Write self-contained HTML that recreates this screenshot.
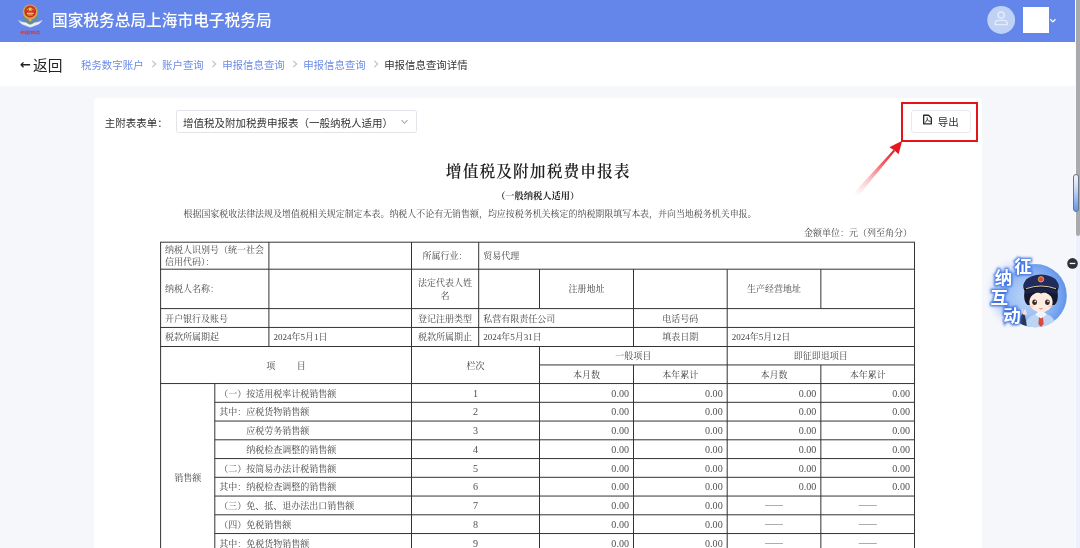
<!DOCTYPE html>
<html lang="zh-CN">
<head>
<meta charset="utf-8">
<title>申报信息查询详情</title>
<style>
*{box-sizing:border-box;margin:0;padding:0}
html,body{width:1080px;height:548px;overflow:hidden;background:#f6f7fa}
body{position:relative;will-change:transform;font-family:"Liberation Sans","Noto Sans CJK SC",sans-serif;color:#333}
.abs{position:absolute}
#hdr{left:0;top:0;width:1076px;height:41.5px;background:#6485e9}
#hdr .title{font-weight:500;left:52px;top:1.3px;height:41.5px;line-height:40.5px;font-size:15.7px;color:#fff;white-space:nowrap}
#bar{left:0;top:41.5px;width:1076px;height:44.5px;background:#fff}
#back{left:20px;top:51.2px;height:30px;line-height:30px;font-size:14.7px;color:#222;white-space:nowrap}
#back .ar{font-family:"DejaVu Sans",sans-serif;font-size:13px;display:inline-block;width:13px;position:relative;top:-2.3px;font-weight:bold}
#bc{left:81px;top:51px;height:30px;line-height:30px;font-size:10.45px;color:#6d8ce6;white-space:nowrap}
#bc b{font-weight:normal;color:#333}
#card{left:93.8px;top:97.5px;width:888.7px;height:460px;background:#fff;border-radius:3px}
#lbl{left:104.7px;top:111px;height:24px;line-height:24px;font-size:10.5px;color:#333;white-space:nowrap}
#sel{left:176px;top:109.5px;width:241px;height:23.5px;border:1px solid #e2e4e9;border-radius:2.5px;background:#fff}
#sel span{position:absolute;left:6px;top:1px;line-height:22px;font-size:10.5px;color:#333;white-space:nowrap}
#btn{left:910.5px;top:109.5px;width:60px;height:23.5px;border:1px solid #e8e9ed;border-radius:3px;background:#fff}
#btn span{position:absolute;left:26.2px;top:.9px;line-height:22px;font-size:10.5px;color:#333;white-space:nowrap}
#redbox{left:901px;top:102.2px;width:76.6px;height:39.8px;border:2.7px solid #e3141a}
.doc{font-family:"Liberation Serif","Noto Serif CJK SC",serif;color:#444}
#t1{left:161px;width:753.5px;top:159.2px;font-weight:600;color:#222;height:26px;line-height:26px;text-align:center;font-size:15.75px;letter-spacing:1.05px;padding-left:1px}
#t2{left:161px;width:753.5px;top:188.6px;height:14px;line-height:14px;text-align:center;font-size:9.25px;font-weight:bold;color:#222}
#t3{left:183.5px;top:207px;height:14px;line-height:14px;font-size:8.96px;white-space:nowrap}
#t4{left:700px;width:212px;top:226px;height:14px;line-height:14px;font-size:9px;text-align:right;white-space:nowrap}
.c{position:absolute;display:flex;align-items:center;padding:0 4.5px;font-size:9px;line-height:12.2px;color:#444;font-family:"Liberation Serif","Noto Serif CJK SC",serif}
.c.l{justify-content:flex-start;text-align:left;padding-right:2px}
.c.m{justify-content:center;text-align:center}
.c.r{justify-content:flex-end;text-align:right}
.c.n{font-size:10.1px;color:#505050;padding-right:4.5px}
.c.it{padding-left:4.5px}
.gap{display:inline-block;width:21.5px}
#grid line{stroke:#333;stroke-width:1}
</style>
</head>
<body>
<div id="hdr" class="abs">
  <svg class="abs" style="left:15px;top:2px" width="31" height="35" viewBox="15 2 31 35">
    <defs><radialGradient id="lg1" cx="50%" cy="40%" r="60%"><stop offset="0" stop-color="#d8402c"/><stop offset="1" stop-color="#c02c22"/></radialGradient></defs>
    <path d="M18.300 20.300 Q22.500 22.700 26.500 22.500 Q28.800 24.500 30.300 24.700 Q31.800 24.500 34.100 22.500 Q38.100 22.700 42.300 20.300 Q39.600 25 34.600 25.700 Q32 27.100 30.300 27.200 Q28.600 27.100 26 25.700 Q21 25 18.300 20.300Z" fill="#eef1f6" stroke="#c3cbdc" stroke-width=".4"/>
    <path d="M23.800 17.200 Q24.800 22.300 30.300 23.200 Q35.800 22.300 36.800 17.200" fill="none" stroke="#5d9870" stroke-width="1.700" stroke-linecap="round"/>
    <circle cx="30.200" cy="11.900" r="7.500" fill="#d8a94a"/>
    <circle cx="30.200" cy="11.900" r="7.500" fill="none" stroke="#c08a34" stroke-width=".9" stroke-dasharray="1.100 1"/>
    <circle cx="30.200" cy="11.500" r="5.900" fill="url(#lg1)"/>
    <path d="M30.200 6.700 l.7 1.600 1.700.15 -1.300 1.100 .4 1.700 -1.500-.9 -1.500.9 .4-1.700 -1.300-1.100 1.700-.15z" fill="#f0cc58"/>
    <circle cx="27.300" cy="9.300" r=".55" fill="#f0cc58"/><circle cx="33.100" cy="9.300" r=".55" fill="#f0cc58"/>
    <rect x="26.700" y="12.700" width="7" height="1.500" rx=".4" fill="#efc552"/>
    <rect x="27.700" y="14.600" width="5" height="1" rx=".4" fill="#e3ae40"/>
    <circle cx="30.200" cy="19.800" r="1.600" fill="#e3bb4e" stroke="#b98a30" stroke-width=".4"/>
    <text x="30.200" y="33.500" text-anchor="middle" font-family="'Liberation Sans','Noto Sans CJK SC',sans-serif" font-weight="bold" font-size="3.900" fill="#d03a34" textLength="20.300" lengthAdjust="spacingAndGlyphs">中国税务</text>
  </svg>
  <div class="abs title">国家税务总局上海市电子税务局</div>
  <svg class="abs" style="left:986px;top:5px" width="30" height="30" viewBox="0 0 30 30">
    <circle cx="15.200" cy="15" r="13.900" fill="#bfd2f6"/>
    <circle cx="15.200" cy="10.100" r="3.100" fill="none" stroke="#e3ecfb" stroke-width="1.400"/>
    <path d="M9 19.600 Q9 15.400 12.600 15.400 L17.800 15.400 Q21.400 15.400 21.400 19.600 Z" fill="none" stroke="#e3ecfb" stroke-width="1.400" stroke-linejoin="round"/>
  </svg>
  <div class="abs" style="left:1022.5px;top:7px;width:26.500px;height:25.500px;background:#fff"></div>
  <svg class="abs" style="left:1049px;top:17px" width="8" height="7" viewBox="0 0 8 7"><path d="M1.300 2.300 L3.900 4.900 L6.500 2.300" fill="none" stroke="#fff" stroke-width="1.250"/></svg>
</div>
<div id="bar" class="abs"></div>
<div id="back" class="abs"><span class="ar">←</span>返回</div>
<div id="bc" class="abs">税务数字账户<svg width="18.4" height="8" viewBox="0 0 18.4 8" style="vertical-align:0.8px"><path d="M8.3 0.9 L11.7 4 L8.3 7.1" fill="none" stroke="#bcc0c8" stroke-width="1.15"/></svg>账户查询<svg width="18.4" height="8" viewBox="0 0 18.4 8" style="vertical-align:0.8px"><path d="M8.3 0.9 L11.7 4 L8.3 7.1" fill="none" stroke="#bcc0c8" stroke-width="1.15"/></svg>申报信息查询<svg width="18.4" height="8" viewBox="0 0 18.4 8" style="vertical-align:0.8px"><path d="M8.3 0.9 L11.7 4 L8.3 7.1" fill="none" stroke="#bcc0c8" stroke-width="1.15"/></svg>申报信息查询<svg width="18.4" height="8" viewBox="0 0 18.4 8" style="vertical-align:0.8px"><path d="M8.3 0.9 L11.7 4 L8.3 7.1" fill="none" stroke="#bcc0c8" stroke-width="1.15"/></svg><b>申报信息查询详情</b></div>

<div id="card" class="abs"></div>
<div id="lbl" class="abs">主附表表单：</div>
<div id="sel" class="abs"><span>增值税及附加税费申报表（一般纳税人适用）</span>
  <svg class="abs" style="left:223px;top:8px" width="9" height="6" viewBox="0 0 9 6"><path d="M1.5 1.2 L4.5 4.3 L7.5 1.2" fill="none" stroke="#a3a6ad" stroke-width="1.1"/></svg>
</div>
<div id="btn" class="abs"><span>导出</span>
  <svg class="abs" style="left:9.7px;top:3.5px" width="12" height="13" viewBox="0 0 12 13">
    <path d="M2.650 1.250 H7.600 L10.350 4 V9.950 H2.650 Z" fill="none" stroke="#2b2b2b" stroke-width="1.300" stroke-linejoin="round"/>
    <path d="M6.200 3.700 V5.700 Q5.700 7.700 4 8.500 M6.200 5.700 Q7.200 7.200 9.200 7.400" fill="none" stroke="#2b2b2b" stroke-width=".9" stroke-linecap="round"/>
  </svg>
</div>
<div id="redbox" class="abs"></div>
<svg class="abs" style="left:840px;top:130px" width="80" height="80" viewBox="840 130 80 80">
  <defs><linearGradient id="ag" gradientUnits="userSpaceOnUse" x1="894" y1="150" x2="855" y2="195"><stop offset="0" stop-color="#ea1820" stop-opacity="1"/><stop offset=".3" stop-color="#ee2a34" stop-opacity=".75"/><stop offset=".65" stop-color="#f2424c" stop-opacity=".3"/><stop offset="1" stop-color="#f4505a" stop-opacity="0"/></linearGradient></defs>
  <path d="M893.600 149.700 L895.100 151 L857.800 196.600 L853.600 193 Z" fill="url(#ag)"/>
  <path d="M902.200 140.800 L898.600 154.300 L894.600 150.600 L889.400 147.300 Z" fill="#e8161e"/>
</svg>

<div id="t1" class="abs doc">增值税及附加税费申报表</div>
<div id="t2" class="abs doc">（一般纳税人适用）</div>
<div id="t3" class="abs doc">根据国家税收法律法规及增值税相关规定制定本表。纳税人不论有无销售额，均应按税务机关核定的纳税期限填写本表，并向当地税务机关申报。</div>
<div id="t4" class="abs doc">金额单位：元（列至角分）</div>

<svg id="grid" class="abs" style="left:0;top:0" width="1080" height="548" viewBox="0 0 1080 548"><line x1="160.1" y1="242.2" x2="915" y2="242.2"/><line x1="160.1" y1="269.2" x2="915" y2="269.2"/><line x1="160.1" y1="308.6" x2="915" y2="308.6"/><line x1="160.1" y1="327.45" x2="915" y2="327.45"/><line x1="160.1" y1="346.5" x2="915" y2="346.5"/><line x1="160.1" y1="383.55" x2="915" y2="383.55"/><line x1="539.5" y1="364.95" x2="914.5" y2="364.95"/><line x1="214.8" y1="402.3" x2="914.5" y2="402.3"/><line x1="214.8" y1="421.05" x2="914.5" y2="421.05"/><line x1="214.8" y1="439.8" x2="914.5" y2="439.8"/><line x1="214.8" y1="458.55" x2="914.5" y2="458.55"/><line x1="214.8" y1="477.3" x2="914.5" y2="477.3"/><line x1="214.8" y1="496.05" x2="914.5" y2="496.05"/><line x1="214.8" y1="514.8" x2="914.5" y2="514.8"/><line x1="214.8" y1="533.55" x2="914.5" y2="533.55"/><line x1="160.6" y1="242.2" x2="160.6" y2="550"/><line x1="914.5" y1="242.2" x2="914.5" y2="550"/><line x1="268.9" y1="242.2" x2="268.9" y2="346.5"/><line x1="411.5" y1="242.2" x2="411.5" y2="550"/><line x1="478.7" y1="242.2" x2="478.7" y2="346.5"/><line x1="539.5" y1="269.2" x2="539.5" y2="308.6"/><line x1="539.5" y1="346.5" x2="539.5" y2="550"/><line x1="633.5" y1="269.2" x2="633.5" y2="346.5"/><line x1="633.5" y1="364.95" x2="633.5" y2="550"/><line x1="727.2" y1="269.2" x2="727.2" y2="550"/><line x1="820.85" y1="269.2" x2="820.85" y2="308.6"/><line x1="820.85" y1="364.95" x2="820.85" y2="550"/><line x1="214.8" y1="383.55" x2="214.8" y2="550"/></svg>
<div class="c l " style="left:160.6px;top:242.9px;width:108.3px;height:27px">纳税人识别号（统一社会信用代码）：</div>
<div class="c m " style="left:411.5px;top:242.9px;width:67.2px;height:27px">所属行业：</div>
<div class="c l " style="left:478.7px;top:242.9px;width:435.8px;height:27px">贸易代理</div>
<div class="c l " style="left:160.6px;top:269.9px;width:108.3px;height:39.4px">纳税人名称：</div>
<div class="c m " style="left:411.5px;top:269.9px;width:67.2px;height:39.4px">法定代表人姓名</div>
<div class="c m " style="left:539.5px;top:269.9px;width:94px;height:39.4px">注册地址</div>
<div class="c m " style="left:727.2px;top:269.9px;width:93.65px;height:39.4px">生产经营地址</div>
<div class="c l " style="left:160.6px;top:309.3px;width:108.3px;height:18.85px">开户银行及账号</div>
<div class="c m " style="left:411.5px;top:309.3px;width:67.2px;height:18.85px">登记注册类型</div>
<div class="c l " style="left:478.7px;top:309.3px;width:154.8px;height:18.85px">私营有限责任公司</div>
<div class="c m " style="left:633.5px;top:309.3px;width:93.7px;height:18.85px">电话号码</div>
<div class="c l " style="left:160.6px;top:327.15px;width:108.3px;height:19.05px">税款所属期起</div>
<div class="c l " style="left:268.9px;top:327.15px;width:142.6px;height:19.05px">2024年5月1日</div>
<div class="c m " style="left:411.5px;top:327.15px;width:67.2px;height:19.05px">税款所属期止</div>
<div class="c l " style="left:478.7px;top:327.15px;width:154.8px;height:19.05px">2024年5月31日</div>
<div class="c m " style="left:633.5px;top:327.15px;width:93.7px;height:19.05px">填表日期</div>
<div class="c l " style="left:727.2px;top:327.15px;width:187.3px;height:19.05px">2024年5月12日</div>
<div class="c m " style="left:160.6px;top:347.2px;width:250.9px;height:37.05px">项<span class="gap"></span>目</div>
<div class="c m " style="left:411.5px;top:347.2px;width:128px;height:37.05px">栏次</div>
<div class="c m " style="left:539.5px;top:347.2px;width:187.7px;height:18.45px">一般项目</div>
<div class="c m " style="left:727.2px;top:347.2px;width:187.3px;height:18.45px">即征即退项目</div>
<div class="c m " style="left:539.5px;top:365.65px;width:94px;height:18.6px">本月数</div>
<div class="c m " style="left:633.5px;top:365.65px;width:93.7px;height:18.6px">本年累计</div>
<div class="c m " style="left:727.2px;top:365.65px;width:93.65px;height:18.6px">本月数</div>
<div class="c m " style="left:820.85px;top:365.65px;width:93.65px;height:18.6px">本年累计</div>
<div class="c m " style="left:160.6px;top:384.25px;width:54.2px;height:187.5px">销售额</div>
<div class="c l it" style="left:214.8px;top:384.25px;width:196.7px;height:18.75px">（一）按适用税率计税销售额</div>
<div class="c m n" style="left:411.5px;top:384.25px;width:128px;height:18.75px">1</div>
<div class="c r n" style="left:539.5px;top:384.25px;width:94px;height:18.75px">0.00</div>
<div class="c r n" style="left:633.5px;top:384.25px;width:93.7px;height:18.75px">0.00</div>
<div class="c r n" style="left:727.2px;top:384.25px;width:93.65px;height:18.75px">0.00</div>
<div class="c r n" style="left:820.85px;top:384.25px;width:93.65px;height:18.75px">0.00</div>
<div class="c l it" style="left:214.8px;top:403px;width:196.7px;height:18.75px">其中：应税货物销售额</div>
<div class="c m n" style="left:411.5px;top:403px;width:128px;height:18.75px">2</div>
<div class="c r n" style="left:539.5px;top:403px;width:94px;height:18.75px">0.00</div>
<div class="c r n" style="left:633.5px;top:403px;width:93.7px;height:18.75px">0.00</div>
<div class="c r n" style="left:727.2px;top:403px;width:93.65px;height:18.75px">0.00</div>
<div class="c r n" style="left:820.85px;top:403px;width:93.65px;height:18.75px">0.00</div>
<div class="c l it" style="left:214.8px;top:421.75px;width:196.7px;height:18.75px"><span style="padding-left:27px">应税劳务销售额</span></div>
<div class="c m n" style="left:411.5px;top:421.75px;width:128px;height:18.75px">3</div>
<div class="c r n" style="left:539.5px;top:421.75px;width:94px;height:18.75px">0.00</div>
<div class="c r n" style="left:633.5px;top:421.75px;width:93.7px;height:18.75px">0.00</div>
<div class="c r n" style="left:727.2px;top:421.75px;width:93.65px;height:18.75px">0.00</div>
<div class="c r n" style="left:820.85px;top:421.75px;width:93.65px;height:18.75px">0.00</div>
<div class="c l it" style="left:214.8px;top:440.5px;width:196.7px;height:18.75px"><span style="padding-left:27px">纳税检查调整的销售额</span></div>
<div class="c m n" style="left:411.5px;top:440.5px;width:128px;height:18.75px">4</div>
<div class="c r n" style="left:539.5px;top:440.5px;width:94px;height:18.75px">0.00</div>
<div class="c r n" style="left:633.5px;top:440.5px;width:93.7px;height:18.75px">0.00</div>
<div class="c r n" style="left:727.2px;top:440.5px;width:93.65px;height:18.75px">0.00</div>
<div class="c r n" style="left:820.85px;top:440.5px;width:93.65px;height:18.75px">0.00</div>
<div class="c l it" style="left:214.8px;top:459.25px;width:196.7px;height:18.75px">（二）按简易办法计税销售额</div>
<div class="c m n" style="left:411.5px;top:459.25px;width:128px;height:18.75px">5</div>
<div class="c r n" style="left:539.5px;top:459.25px;width:94px;height:18.75px">0.00</div>
<div class="c r n" style="left:633.5px;top:459.25px;width:93.7px;height:18.75px">0.00</div>
<div class="c r n" style="left:727.2px;top:459.25px;width:93.65px;height:18.75px">0.00</div>
<div class="c r n" style="left:820.85px;top:459.25px;width:93.65px;height:18.75px">0.00</div>
<div class="c l it" style="left:214.8px;top:478px;width:196.7px;height:18.75px">其中：纳税检查调整的销售额</div>
<div class="c m n" style="left:411.5px;top:478px;width:128px;height:18.75px">6</div>
<div class="c r n" style="left:539.5px;top:478px;width:94px;height:18.75px">0.00</div>
<div class="c r n" style="left:633.5px;top:478px;width:93.7px;height:18.75px">0.00</div>
<div class="c r n" style="left:727.2px;top:478px;width:93.65px;height:18.75px">0.00</div>
<div class="c r n" style="left:820.85px;top:478px;width:93.65px;height:18.75px">0.00</div>
<div class="c l it" style="left:214.8px;top:496.75px;width:196.7px;height:18.75px">（三）免、抵、退办法出口销售额</div>
<div class="c m n" style="left:411.5px;top:496.75px;width:128px;height:18.75px">7</div>
<div class="c r n" style="left:539.5px;top:496.75px;width:94px;height:18.75px">0.00</div>
<div class="c r n" style="left:633.5px;top:496.75px;width:93.7px;height:18.75px">0.00</div>
<div class="c m " style="left:727.2px;top:494.75px;width:93.65px;height:18.75px">——</div>
<div class="c m " style="left:820.85px;top:494.75px;width:93.65px;height:18.75px">——</div>
<div class="c l it" style="left:214.8px;top:515.5px;width:196.7px;height:18.75px">（四）免税销售额</div>
<div class="c m n" style="left:411.5px;top:515.5px;width:128px;height:18.75px">8</div>
<div class="c r n" style="left:539.5px;top:515.5px;width:94px;height:18.75px">0.00</div>
<div class="c r n" style="left:633.5px;top:515.5px;width:93.7px;height:18.75px">0.00</div>
<div class="c m " style="left:727.2px;top:513.5px;width:93.65px;height:18.75px">——</div>
<div class="c m " style="left:820.85px;top:513.5px;width:93.65px;height:18.75px">——</div>
<div class="c l it" style="left:214.8px;top:534.25px;width:196.7px;height:18.75px">其中：免税货物销售额</div>
<div class="c m n" style="left:411.5px;top:534.25px;width:128px;height:18.75px">9</div>
<div class="c r n" style="left:539.5px;top:534.25px;width:94px;height:18.75px">0.00</div>
<div class="c r n" style="left:633.5px;top:534.25px;width:93.7px;height:18.75px">0.00</div>
<div class="c m " style="left:727.2px;top:532.25px;width:93.65px;height:18.75px">——</div>
<div class="c m " style="left:820.85px;top:532.25px;width:93.65px;height:18.75px">——</div>

<div class="abs" style="left:1076px;top:0;width:4px;height:548px;background:#eef1fb"></div>
<div class="abs" style="left:1075px;top:0;width:1px;height:548px;background:#fafbfe"></div>
<div class="abs" style="left:1076px;top:0;width:4px;height:236px;background:#a9aaad;border-radius:0 0 2px 2px"></div>
<div class="abs" style="left:1073.200px;top:173.700px;width:6px;height:38.500px;border-radius:3px;border:1px solid #6d7485;background:linear-gradient(#f3f5f9 0%,#cfdcf3 35%,#5d95ee 100%)"></div>
<svg class="abs" style="left:980px;top:250px" width="100" height="90" viewBox="980 250 100 90">
  <defs>
    <radialGradient id="mg" cx="38%" cy="52%" r="68%"><stop offset="0" stop-color="#bdd7fa"/><stop offset=".45" stop-color="#9cc0f5"/><stop offset=".8" stop-color="#6f9fee"/><stop offset="1" stop-color="#5589e6"/></radialGradient>
    <radialGradient id="glow" cx="50%" cy="50%" r="50%"><stop offset="0" stop-color="#9dbcf5" stop-opacity=".95"/><stop offset=".6" stop-color="#a9c5f7" stop-opacity=".7"/><stop offset="1" stop-color="#dfe8fb" stop-opacity="0"/></radialGradient>
    <filter id="tg" x="-40%" y="-40%" width="180%" height="180%"><feGaussianBlur stdDeviation="1.100"/></filter>
    <clipPath id="mc"><circle cx="1035.200" cy="295.700" r="31.600"/></clipPath>
  </defs>
  <ellipse cx="1012" cy="293" rx="27" ry="36" fill="url(#glow)"/>
  <circle cx="1035.200" cy="295.700" r="31.600" fill="url(#mg)"/>
  <g clip-path="url(#mc)">
    <!-- body -->
    <path d="M1024 330 Q1026 316 1035 314.500 L1047 314.500 Q1055 316 1056.500 330 Z" fill="#bcd5f4"/>
    <path d="M1039.200 315 L1042.800 315 L1043.600 324 L1041 327 L1038.400 324 Z" fill="#d94a3c"/>
    <path d="M1035 314.500 L1041 318.500 L1047 314.500 L1044 312 L1038 312Z" fill="#f2f6fc"/>
    <path d="M1019 324 Q1021 312 1024 313 Q1026 318 1027 328 Z" fill="#2a3558"/>
    <path d="M1021 314 l1.200 -5 1.200 5 M1024 315 l1 -5.500 1.300 5.500" stroke="#f3e3d8" stroke-width="1.300" fill="none"/>
  </g>
  <!-- hair -->
  <path d="M1024.500 291 Q1021.500 284 1026 281 L1056 281 Q1060.500 284 1057.500 291 Q1059 301 1054.500 305 L1027.500 305 Q1023 301 1024.500 291Z" fill="#16192b"/>
  <!-- face -->
  <ellipse cx="1041" cy="302" rx="11.600" ry="10.300" fill="#fdebe0"/>
  <path d="M1029.800 297 Q1035 290.500 1041 293.500 Q1047 290.500 1052.200 297 L1052.200 292 L1029.800 292Z" fill="#16192b"/>
  <!-- eyes -->
  <ellipse cx="1034.600" cy="302.300" rx="2.300" ry="2.700" fill="#3a2a26"/>
  <ellipse cx="1047.400" cy="302.300" rx="2.300" ry="2.700" fill="#3a2a26"/>
  <circle cx="1035.200" cy="301.400" r=".8" fill="#fff"/><circle cx="1048" cy="301.400" r=".8" fill="#fff"/>
  <ellipse cx="1031.800" cy="306.300" rx="1.900" ry="1.100" fill="#f8c4bb" opacity=".8"/><ellipse cx="1050.200" cy="306.300" rx="1.900" ry="1.100" fill="#f8c4bb" opacity=".8"/>
  <path d="M1039.300 308.300 Q1041 309.800 1042.700 308.300" fill="none" stroke="#c0564a" stroke-width=".7"/>
  <!-- hat -->
  <path d="M1024 288.500 Q1022.500 280 1031 276.500 Q1041 272.500 1051 276.500 Q1059.500 280 1058 288.500 Q1041 283.500 1024 288.500Z" fill="#222c5c"/>
  <path d="M1025.300 290.500 Q1041 284.500 1056.700 290.500 Q1057.500 293 1055.500 294 Q1041 288.500 1026.500 294 Q1024.500 293 1025.300 290.500Z" fill="#1b2348"/>
  <path d="M1026 288.700 Q1041 283.300 1056 288.700" fill="none" stroke="#e8d9a8" stroke-width=".9"/>
  <circle cx="1041" cy="279.300" r="2.700" fill="#d9483b"/><circle cx="1041" cy="279.300" r="2.700" fill="none" stroke="#e7c25c" stroke-width=".8"/>
  <!-- text -->
  <g font-family="'Liberation Sans','Noto Sans CJK SC',sans-serif" font-weight="bold" font-size="17.500">
    <g fill="#3f72e2" stroke="#3f72e2" stroke-width="2.600" filter="url(#tg)">
      <text x="1014.300" y="272.600">征</text><text x="994.800" y="284">纳</text><text x="990.600" y="303.600">互</text><text x="1003.200" y="322">动</text>
    </g>
    <g fill="#fff">
      <text x="1014.300" y="272.600">征</text><text x="994.800" y="284">纳</text><text x="990.600" y="303.600">互</text><text x="1003.200" y="322">动</text>
    </g>
  </g>
  <circle cx="1072.500" cy="263.400" r="5.300" fill="#2e3238"/>
  <rect x="1069.700" y="262.800" width="5.600" height="1.300" fill="#fff"/>
</svg>
</body>
</html>
